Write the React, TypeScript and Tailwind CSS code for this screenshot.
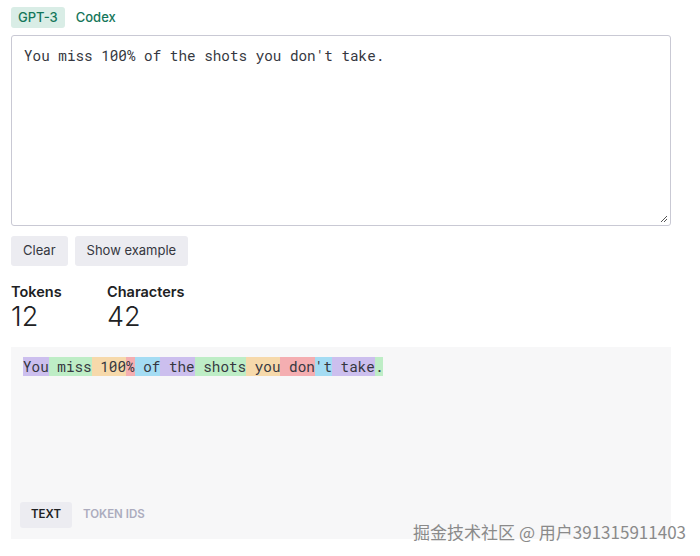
const tokens = [
  { t: "You", c: "bg-[rgba(107,64,216,0.3)]" },
  { t: " miss", c: "bg-[rgba(104,222,122,0.4)]" },
  { t: " 100", c: "bg-[rgba(244,172,54,0.4)]" },
  { t: "%", c: "bg-[rgba(239,65,70,0.4)]" },
  { t: " of", c: "bg-[rgba(39,181,234,0.4)]" },
  { t: " the", c: "bg-[rgba(107,64,216,0.3)]" },
  { t: " shots", c: "bg-[rgba(104,222,122,0.4)]" },
  { t: " you", c: "bg-[rgba(244,172,54,0.4)]" },
  { t: " don", c: "bg-[rgba(239,65,70,0.4)]" },
  { t: "'t", c: "bg-[rgba(39,181,234,0.4)]" },
  { t: " take", c: "bg-[rgba(107,64,216,0.3)]" },
  { t: ".", c: "bg-[rgba(104,222,122,0.4)]" },
];

const mono = "font-['Roboto_Mono','DejaVu_Sans_Mono',monospace]";

export default function App() {
  return (
    <div className="relative w-[700px] h-[556px] bg-white font-['Inter',sans-serif] text-[#202123] overflow-hidden">
      <div className="w-[660px] ml-[11px] pt-[7px]">
        <div className="flex gap-[4px] text-[13px] font-medium">
          <div className="h-[21px] px-[7px] flex items-center rounded-[3px] bg-[#d9ede6] text-[#14765a]">GPT-3</div>
          <div className="h-[21px] px-[7px] flex items-center text-[#14765a]">Codex</div>
        </div>

        <div className="mt-[7px] h-[191px] border border-[#c9c9d4] rounded-[3px] relative">
          <div className={`pl-[12px] pt-[10px] text-[14.3px] leading-[20px] text-[#353740] ${mono}`}>
            You miss 100% of the shots you don't take.
          </div>
          <svg className="absolute right-[2px] bottom-[2px]" width="8" height="8" viewBox="0 0 8 8">
            <path d="M7 1 L1 7 M7 4 L4 7" stroke="#555" strokeWidth="1" />
          </svg>
        </div>

        <div className="flex gap-[7px] mt-[10px] text-[13px]">
          <div className="h-[30px] px-[12px] flex items-center rounded-[3px] bg-[#ececf1] text-[#353740]">Clear</div>
          <div className="h-[30px] px-[12px] flex items-center rounded-[3px] bg-[#ececf1] text-[#353740]">Show example</div>
        </div>

        <div className="flex mt-[18px]">
          <div className="w-[96px]">
            <div className="text-[14.5px] font-semibold leading-[16px]">Tokens</div>
            <div className="text-[27px] leading-[32px] font-light mt-[1px]">12</div>
          </div>
          <div>
            <div className="text-[14.5px] font-semibold leading-[16px]">Characters</div>
            <div className="text-[27px] leading-[32px] font-light mt-[1px]">42</div>
          </div>
        </div>

        <div className="mt-[14px] h-[192px] bg-[#f7f7f8] flex flex-col justify-between pl-[12px] pt-[11px] pb-[11px]">
          <div className={`text-[14.3px] leading-[18px] text-[#353740] whitespace-pre ${mono}`}>
            {tokens.map((k, i) => (
              <span key={i} className={k.c}>{k.t}</span>
            ))}
          </div>
          <div className="flex text-[11.5px] font-semibold -ml-[3px]">
            <div className="h-[26px] px-[11px] flex items-center rounded-[3px] bg-[#ececf1] text-[#202123]">TEXT</div>
            <div className="h-[26px] px-[11px] flex items-center text-[#acacbe]">TOKEN IDS</div>
          </div>
        </div>
      </div>

      <div className="absolute right-[14px] bottom-[14px] text-[17px] leading-[20px] text-[#8a8a8a] font-['Noto_Sans_CJK_SC',sans-serif]">
        掘金技术社区 @ 用户391315911403
      </div>
    </div>
  );
}
